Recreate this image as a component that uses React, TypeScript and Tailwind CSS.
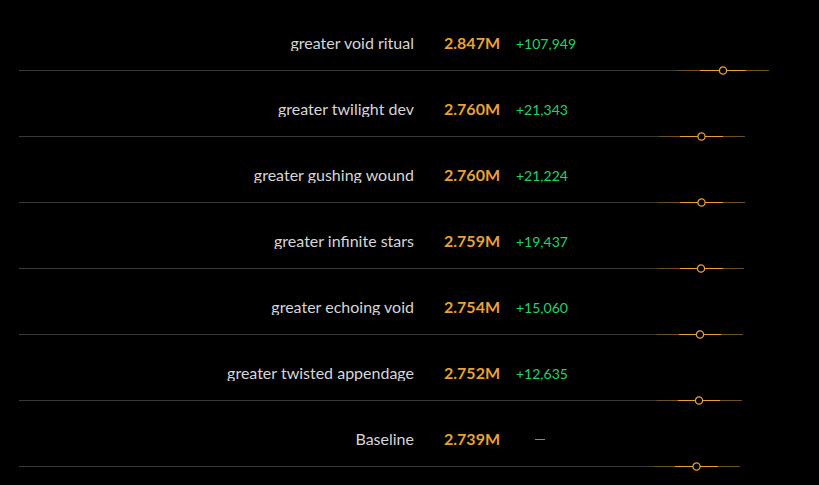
const ROWS = [
  { name: "greater void ritual", value: "2.847M", delta: "+107,949", box: [677, 700, 723, 746, 769] },
  { name: "greater twilight dev", value: "2.760M", delta: "+21,343", box: [659, 680, 701.5, 723, 745] },
  { name: "greater gushing wound", value: "2.760M", delta: "+21,224", box: [659, 680, 701.5, 723, 745] },
  { name: "greater infinite stars", value: "2.759M", delta: "+19,437", box: [658, 680, 701, 723, 744] },
  { name: "greater echoing void", value: "2.754M", delta: "+15,060", box: [657, 679, 700, 721, 743] },
  { name: "greater twisted appendage", value: "2.752M", delta: "+12,635", box: [657, 678, 699, 720, 742] },
  { name: "Baseline", value: "2.739M", delta: null, box: [653, 675, 696.5, 718, 740] },
];

function BoxLine({ box }: { box: number[] }) {
  const [lo, q1, med, q3, hi] = box;
  return (
    <svg width="819" height="9" className="block">
      <line x1="19" y1="4.5" x2={lo} y2="4.5" stroke="#3a3a3a" strokeWidth="1" />
      <line x1={lo} y1="4.5" x2={hi} y2="4.5" stroke="#6b5124" strokeWidth="1" />
      <line x1={q1} y1="4.5" x2={q3} y2="4.5" stroke="#e8a030" strokeWidth="1" />
      <circle cx={med} cy="4.5" r="3.6" fill="#000" stroke="#e8a030" strokeWidth="1.3" />
    </svg>
  );
}

export default function App() {
  return (
    <div className="w-[819px] h-[485px] bg-black overflow-hidden font-['Lato',sans-serif]">
      <div className="pt-[5px]">
        {ROWS.map((row) => (
          <div key={row.name} className="h-[66px] flex flex-col">
            <div className="flex items-start mt-[30px] h-[16px]">
              <div className="w-[414px] text-right text-[16px] leading-none h-[16px] overflow-hidden text-[#d6d6d6]">
                {row.name}
              </div>
              <div className="ml-[30px] w-[72px] text-[16px] leading-none font-bold text-[#e9a233]">
                {row.value}
              </div>
              {row.delta ? (
                <div className="text-[14px] leading-none text-[#20d468] mt-[2px]">{row.delta}</div>
              ) : (
                <div className="ml-[19px] mt-[8px] w-[10px] h-[1px] bg-[#1fb5c8]" />
              )}
            </div>
            <div className="mt-auto mb-[-4px]">
              <BoxLine box={row.box} />
            </div>
          </div>
        ))}
      </div>
    </div>
  );
}
